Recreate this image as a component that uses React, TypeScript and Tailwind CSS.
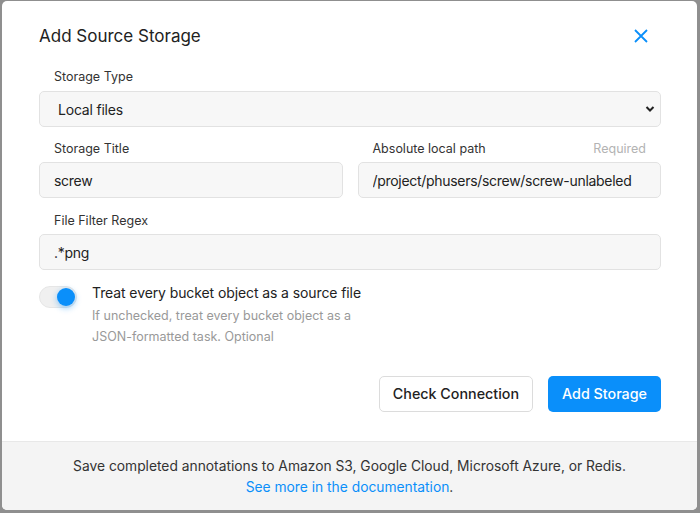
import { useState } from "react";

const font = { fontFamily: "Inter, 'Noto Sans', sans-serif" };

function Field({
  label,
  value,
  hint,
}: {
  label: string;
  value: string;
  hint?: string;
}) {
  return (
    <div className="flex flex-col flex-1 min-w-0">
      <div className="flex items-center justify-between px-[15px] h-[18px] mb-[4px]">
        <span className="text-[12.5px] text-[#333]">{label}</span>
        {hint && <span className="text-[12.5px] text-[#b3b3b3]">{hint}</span>}
      </div>
      <input
        readOnly
        value={value}
        className="h-[36px] w-full rounded-[5px] border border-[#e2e2e2] bg-[#f7f7f7] px-[14px] text-[14px] tracking-[-0.3px] text-[#222] outline-none"
      />
    </div>
  );
}

function Toggle({ on, onChange }: { on: boolean; onChange: () => void }) {
  return (
    <button
      onClick={onChange}
      className="relative mt-[3px] h-[22px] w-[38px] shrink-0 rounded-full border border-[#e6e6e6] bg-[#f0f0f0]"
    >
      <span
        className={
          on
            ? "absolute right-[1px] top-[1px] h-[18px] w-[18px] rounded-full bg-[#0a8ffa] shadow-[0_2px_6px_rgba(10,143,250,0.45)]"
            : "absolute left-[1px] top-[1px] h-[18px] w-[18px] rounded-full bg-white shadow"
        }
      />
    </button>
  );
}

export default function App() {
  const [asSource, setAsSource] = useState(true);

  return (
    <div
      className="w-[700px] h-[513px] bg-[#8f8f8f] pl-[2px] pt-[1px] pr-[3px] pb-[3px]"
      style={font}
    >
      <div className="flex h-full flex-col overflow-hidden rounded-[5px] bg-white">
        <div className="flex-1 pl-[37px] pr-[36px] pt-[24px]">
          <div className="flex items-center justify-between h-[24px]">
            <h2 className="text-[17px] text-[#222]">Add Source Storage</h2>
            <svg
              width="14"
              height="14"
              viewBox="0 0 14 14"
              className="mr-[13px] -mt-[2px] text-[#0a8ffa]"
              fill="none"
              stroke="currentColor"
              strokeWidth="1.8"
            >
              <path d="M1 1 L13 13 M13 1 L1 13" />
            </svg>
          </div>

          <div className="mt-[19px] flex flex-col">
            <div className="px-[15px] h-[18px] mb-[5px] text-[12.5px] leading-[18px] text-[#333]">
              Storage Type
            </div>
            <div className="flex h-[36px] items-center justify-between rounded-[5px] border border-[#e2e2e2] bg-[#f7f7f7] pl-[18px] pr-[5px] text-[14px] tracking-[-0.2px] text-[#222]">
              <span>Local files</span>
              <svg width="10" height="8" viewBox="0 0 10 8" fill="none" stroke="#222" strokeWidth="2">
                <path d="M1.5 2 L5 5.5 L8.5 2" />
              </svg>
            </div>
          </div>

          <div className="mt-[13px] flex gap-[15px]">
            <Field label="Storage Title" value="screw" />
            <Field
              label="Absolute local path"
              value="/project/phusers/screw/screw-unlabeled"
              hint="Required"
            />
          </div>

          <div className="mt-[14px] flex">
            <Field label="File Filter Regex" value=".*png" />
          </div>

          <div className="mt-[13px] flex gap-[15px]">
            <Toggle on={asSource} onChange={() => setAsSource(!asSource)} />
            <div className="flex flex-col">
              <span className="text-[14px] leading-[20px] tracking-[-0.1px] text-[#222]">
                Treat every bucket object as a source file
              </span>
              <span className="mt-[2px] w-[270px] text-[12.5px] leading-[21px] text-[#999]">
                If unchecked, treat every bucket object as a JSON-formatted task. Optional
              </span>
            </div>
          </div>

          <div className="mt-[29px] flex justify-end gap-[15px]">
            <button className="h-[36px] rounded-[5px] border border-[#dcdcdc] bg-white px-[13px] text-[14.3px] font-medium text-[#222]">
              Check Connection
            </button>
            <button className="h-[36px] rounded-[5px] bg-[#0a8ffa] px-[14px] text-[14.3px] font-medium text-white">
              Add Storage
            </button>
          </div>
        </div>

        <div className="h-[69px] border-t border-[#e8e8e8] bg-[#f4f4f4] pt-[14px] text-center text-[13.8px] leading-[21px] text-[#333]">
          <p>Save completed annotations to Amazon S3, Google Cloud, Microsoft Azure, or Redis.</p>
          <p>
            <a className="text-[#0a8ffa]">See more in the documentation</a>.
          </p>
        </div>
      </div>
    </div>
  );
}
